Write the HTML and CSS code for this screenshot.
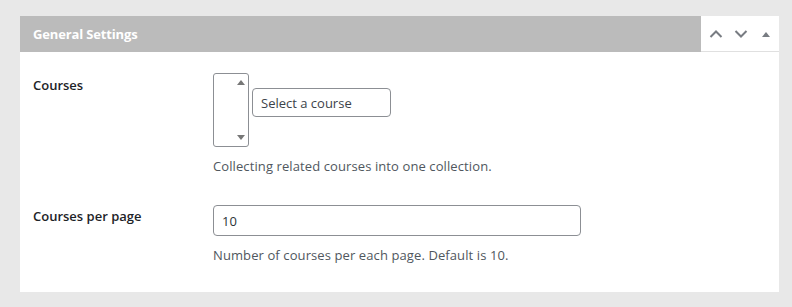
FILE: index.html
```html
<!DOCTYPE html>
<html>
<head>
<meta charset="utf-8">
<link rel="stylesheet" href="styles.css">
</head>
<body>
<div class="postbox">
  <div class="postbox-header">
    <h2 class="title">General Settings</h2>
    <div class="handles">
      <button class="handle" aria-label="Move up">
        <svg width="14" height="10" viewBox="0 0 14 10"><path d="M1.5 8 L7 2.5 L12.5 8" fill="none" stroke="#787c82" stroke-width="2"/></svg>
      </button>
      <button class="handle" aria-label="Move down">
        <svg width="14" height="10" viewBox="0 0 14 10"><path d="M1.5 2 L7 7.5 L12.5 2" fill="none" stroke="#787c82" stroke-width="2"/></svg>
      </button>
      <button class="handle" aria-label="Toggle panel">
        <svg width="10" height="8" viewBox="0 0 10 8"><path d="M1 7 L5 2 L9 7 Z" fill="#787c82"/></svg>
      </button>
    </div>
  </div>
  <div class="inside">
    <div class="row">
      <div class="label">Courses</div>
      <div class="field">
        <div class="select-wrap">
          <div class="listbox">
            <span class="arr up"></span>
            <span class="arr down"></span>
          </div>
          <input class="search" type="text" placeholder="Select a course">
        </div>
        <p class="desc">Collecting related courses into one collection.</p>
      </div>
    </div>
    <div class="row row2">
      <div class="label">Courses per page</div>
      <div class="field">
        <input class="text" type="text" value="10">
        <p class="desc">Number of courses per each page. Default is 10.</p>
      </div>
    </div>
  </div>
</div>
</body>
</html>
```

FILE: styles.css
```css
* { box-sizing: border-box; }
html, body { margin: 0; padding: 0; }
body {
  background: #e8e8e8;
  font-family: "Open Sans", "Noto Sans", sans-serif;
  font-size: 13px;
  color: #1d2327;
  padding: 16px 13px 0 20px;
}
.postbox {
  background: #fff;
  width: 759px;
}
.postbox-header {
  display: flex;
  height: 36px;
  background: #bbbbbb;
}
.title {
  flex: 1;
  margin: 0;
  padding: 0 13px;
  font-size: 13px;
  font-weight: 700;
  color: #fff;
  line-height: 36px;
  letter-spacing: -0.15px;
}
.handles {
  display: flex;
  align-items: center;
  background: #fff;
  width: 78px;
  padding-left: 2px;
  border-bottom: 1px solid #e0e0e0;
}
.handle {
  border: 0;
  background: none;
  padding: 0;
  width: 26px;
  height: 36px;
  display: flex;
  align-items: center;
  justify-content: center;
}
.inside {
  padding: 21px 13px 28px 13px;
}
.row {
  display: flex;
}
.row2 { margin-top: 30px; }
.label {
  width: 180px;
  font-weight: 600;
  font-size: 13px;
  line-height: 18px;
  padding-top: 3px;
}
.row2 .label { padding-top: 2px; }
.field { flex: 1; }
.select-wrap {
  display: flex;
  align-items: flex-start;
}
.listbox {
  position: relative;
  width: 36px;
  height: 74px;
  border: 1px solid #8c8f94;
  border-radius: 3px;
  background: #fff;
}
.arr {
  position: absolute;
  right: 3px;
  width: 0;
  height: 0;
  border-left: 4px solid transparent;
  border-right: 4px solid transparent;
}
.arr.up { top: 6px; border-bottom: 5px solid #777; }
.arr.down { bottom: 6px; border-top: 5px solid #777; }
.search {
  margin-left: 3px;
  margin-top: 15px;
  width: 139px;
  height: 29px;
  border: 1px solid #8c8f94;
  border-radius: 4px;
  padding: 0 8px;
  font-family: inherit;
  font-size: 13px;
  color: #2c3338;
}
.search::placeholder { color: #3c434a; opacity: 1; }
.text {
  width: 368px;
  height: 31px;
  border: 1px solid #8c8f94;
  border-radius: 4px;
  padding: 0 8px;
  font-family: inherit;
  font-size: 13px;
  color: #2c3338;
}
.desc {
  margin: 10px 0 0;
  font-size: 13px;
  line-height: 18px;
  letter-spacing: 0.1px;
  color: #50575e;
}
```
